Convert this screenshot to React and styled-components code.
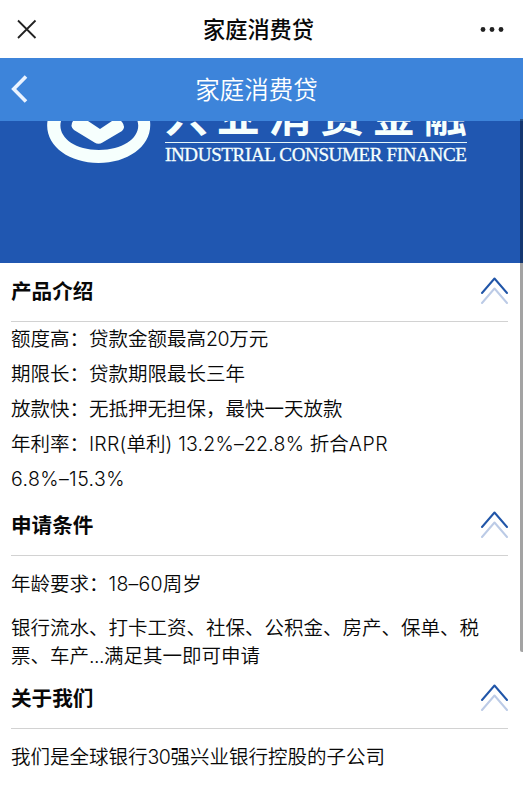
import React from 'react'
import styled, { createGlobalStyle } from 'styled-components'

const GlobalStyle = createGlobalStyle`
body{
margin:0;
background-color:#fff;
font-family:'Noto Sans CJK SC', sans-serif;
color:#080808;
overflow:hidden;
}
`
const Container = styled.div`
position:relative;
height:795px;
overflow:hidden;
`
const TopBar = styled.div`
height:58px;
padding:0 19px 0 17px;
box-sizing:border-box;
display:flex;
align-items:center;
justify-content:space-between;
`
const TopTitle = styled.div`
font-size:22.2px;
font-weight:500;
line-height:56px;
padding-bottom:2px;
`
const NavBar = styled.div`
height:62.5px;
padding:0 21px 0 11px;
box-sizing:border-box;
display:grid;
grid-template-columns:17px 1fr 17px;
align-items:center;
background-color:#3d84da;
color:#fff;
`
const NavTitle = styled.div`
font-size:24.5px;
font-weight:350;
line-height:62px;
text-align:center;
`
const Banner = styled.div`
height:142.5px;
display:flex;
align-items:flex-start;
padding-left:46px;
background-color:#2057b1;
color:#f6fffd;
overflow:hidden;
`
const BrandMark = styled.svg`
flex:none;
width:106px;
height:44px;
`
const Brand = styled.div`
width:302px;
margin:-27.5px 0 0 13px;
`
const BrandName = styled.div`
height:48.5px;
line-height:40px;
font-size:43px;
font-weight:700;
display:flex;
justify-content:space-between;
border-bottom:1.5px solid #e6f6f8;
`
const BrandEnglish = styled.div`
font-family:'Liberation Serif', serif;
font-size:19px;
line-height:23px;
white-space:nowrap;
-webkit-text-stroke:0.3px #f6fffd;
letter-spacing:-0.34px;
`
const Content = styled.div`
padding:0 15px 0 11px;
`
const SectionHeader = styled.div`
height:58.5px;
box-sizing:border-box;
display:flex;
align-items:center;
justify-content:space-between;
border-bottom:1.5px solid #d2d2d2;
`
const SectionTitle = styled.div`
font-size:20.6px;
font-weight:700;
line-height:52px;
padding-bottom:4px;
`
const Arrows = styled.svg`
width:28px;
height:28px;
margin-top:-4px;
`
const Rows = styled.div`
margin-top:-1.5px;
padding-bottom:2px;
`
const Row = styled.div`
height:35px;
font-size:19.5px;
font-weight:350;
line-height:35px;
white-space:nowrap;
`
const Desc = styled.p`
margin:13.5px 0 15px;
font-size:19.5px;
font-weight:350;
line-height:28.5px;
white-space:nowrap;

& + &{
margin:0 0 0.5px;
}
`
const Latin = styled.span`
font-family:'Inter', sans-serif;
font-weight:350;
line-height:1;
letter-spacing:${props => props.$spacing || '0.2px'};
`
const Scrollbar = styled.div`
position:absolute;
top:119px;
right:0;
width:3px;
height:533px;
border-radius:0 0 0 2px;
background-color:rgba(0,0,0,0.36);
`

const Section = ({ title, children }) => (
  <>
    <SectionHeader>
      <SectionTitle>{title}</SectionTitle>
      <Arrows viewBox="0 0 28 28" fill="none" strokeWidth="2" strokeLinecap="round" strokeLinejoin="round">
        <path d="M2 27L14.5 12.5L27 27" stroke="#bccbe6" />
        <path d="M2 17L14.5 2.5L27 17" stroke="#2055a8" />
      </Arrows>
    </SectionHeader>
    {children}
  </>
)

const App = () => {
  return (
    <Container>
      <GlobalStyle />
      <TopBar>
        <svg width="20" height="20" viewBox="0 0 20 20" fill="none" stroke="#222" strokeWidth="1.8">
          <path d="M1 1.5L18.5 19M18.5 1.5L1 19" />
        </svg>
        <TopTitle>家庭消费贷</TopTitle>
        <svg width="24" height="6" viewBox="0 0 24 6" fill="#222">
          <circle cx="3" cy="3.5" r="2.4" />
          <circle cx="12" cy="3.5" r="2.4" />
          <circle cx="21" cy="3.5" r="2.4" />
        </svg>
      </TopBar>
      <NavBar>
        <svg width="17" height="28" viewBox="0 0 17 28" fill="none" stroke="#eaf3ff" strokeWidth="3.6">
          <path d="M15 1.5L2.7 14L15 26.5" />
        </svg>
        <NavTitle>家庭消费贷</NavTitle>
      </NavBar>
      <Banner>
        <BrandMark viewBox="0 0 106 44">
          <path
            fill="#f6fffd"
            fillRule="evenodd"
            d="M1.500 0C-2 24 22 42 52.500 42C83 42 107 24 104 0H91.500C96 15 79 29 53 29C27 29 11 15 15 0Z"
          />
          <path fill="#f6fffd" d="M27 0Q23.500 5 28 9L48.500 21.500Q52.500 24 56.500 21.500L76 10Q80 6 76 1L75 0H66L54 8L42 0Z" />
        </BrandMark>
        <Brand>
          <BrandName>
            {['兴', '业', '消', '费', '金', '融'].map(char => <span key={char}>{char}</span>)}
          </BrandName>
          <BrandEnglish>INDUSTRIAL CONSUMER FINANCE</BrandEnglish>
        </Brand>
      </Banner>
      <Content>
        <Section title="产品介绍">
          <Rows>
            <Row>额度高：贷款金额最高<Latin $spacing="-0.4px">20</Latin>万元</Row>
            <Row>期限长：贷款期限最长三年</Row>
            <Row>放款快：无抵押无担保，最快一天放款</Row>
            <Row>年利率：<Latin>IRR(</Latin>单利<Latin>) 13.2%–22.8% </Latin>折合<Latin $spacing="0.5px">APR</Latin></Row>
            <Row><Latin $spacing="0.4px">6.8%–15.3%</Latin></Row>
          </Rows>
        </Section>
        <Section title="申请条件">
          <Desc>年龄要求：<Latin>18–60</Latin>周岁</Desc>
          <Desc>银行流水、打卡工资、社保、公积金、房产、保单、税<br />票、车产<Latin $spacing="-0.5px">...</Latin>满足其一即可申请</Desc>
        </Section>
        <Section title="关于我们">
          <Desc>我们是全球银行<Latin $spacing="-0.5px">30</Latin>强兴业银行控股的子公司</Desc>
        </Section>
      </Content>
      <Scrollbar />
    </Container>
  )
}

export default App
